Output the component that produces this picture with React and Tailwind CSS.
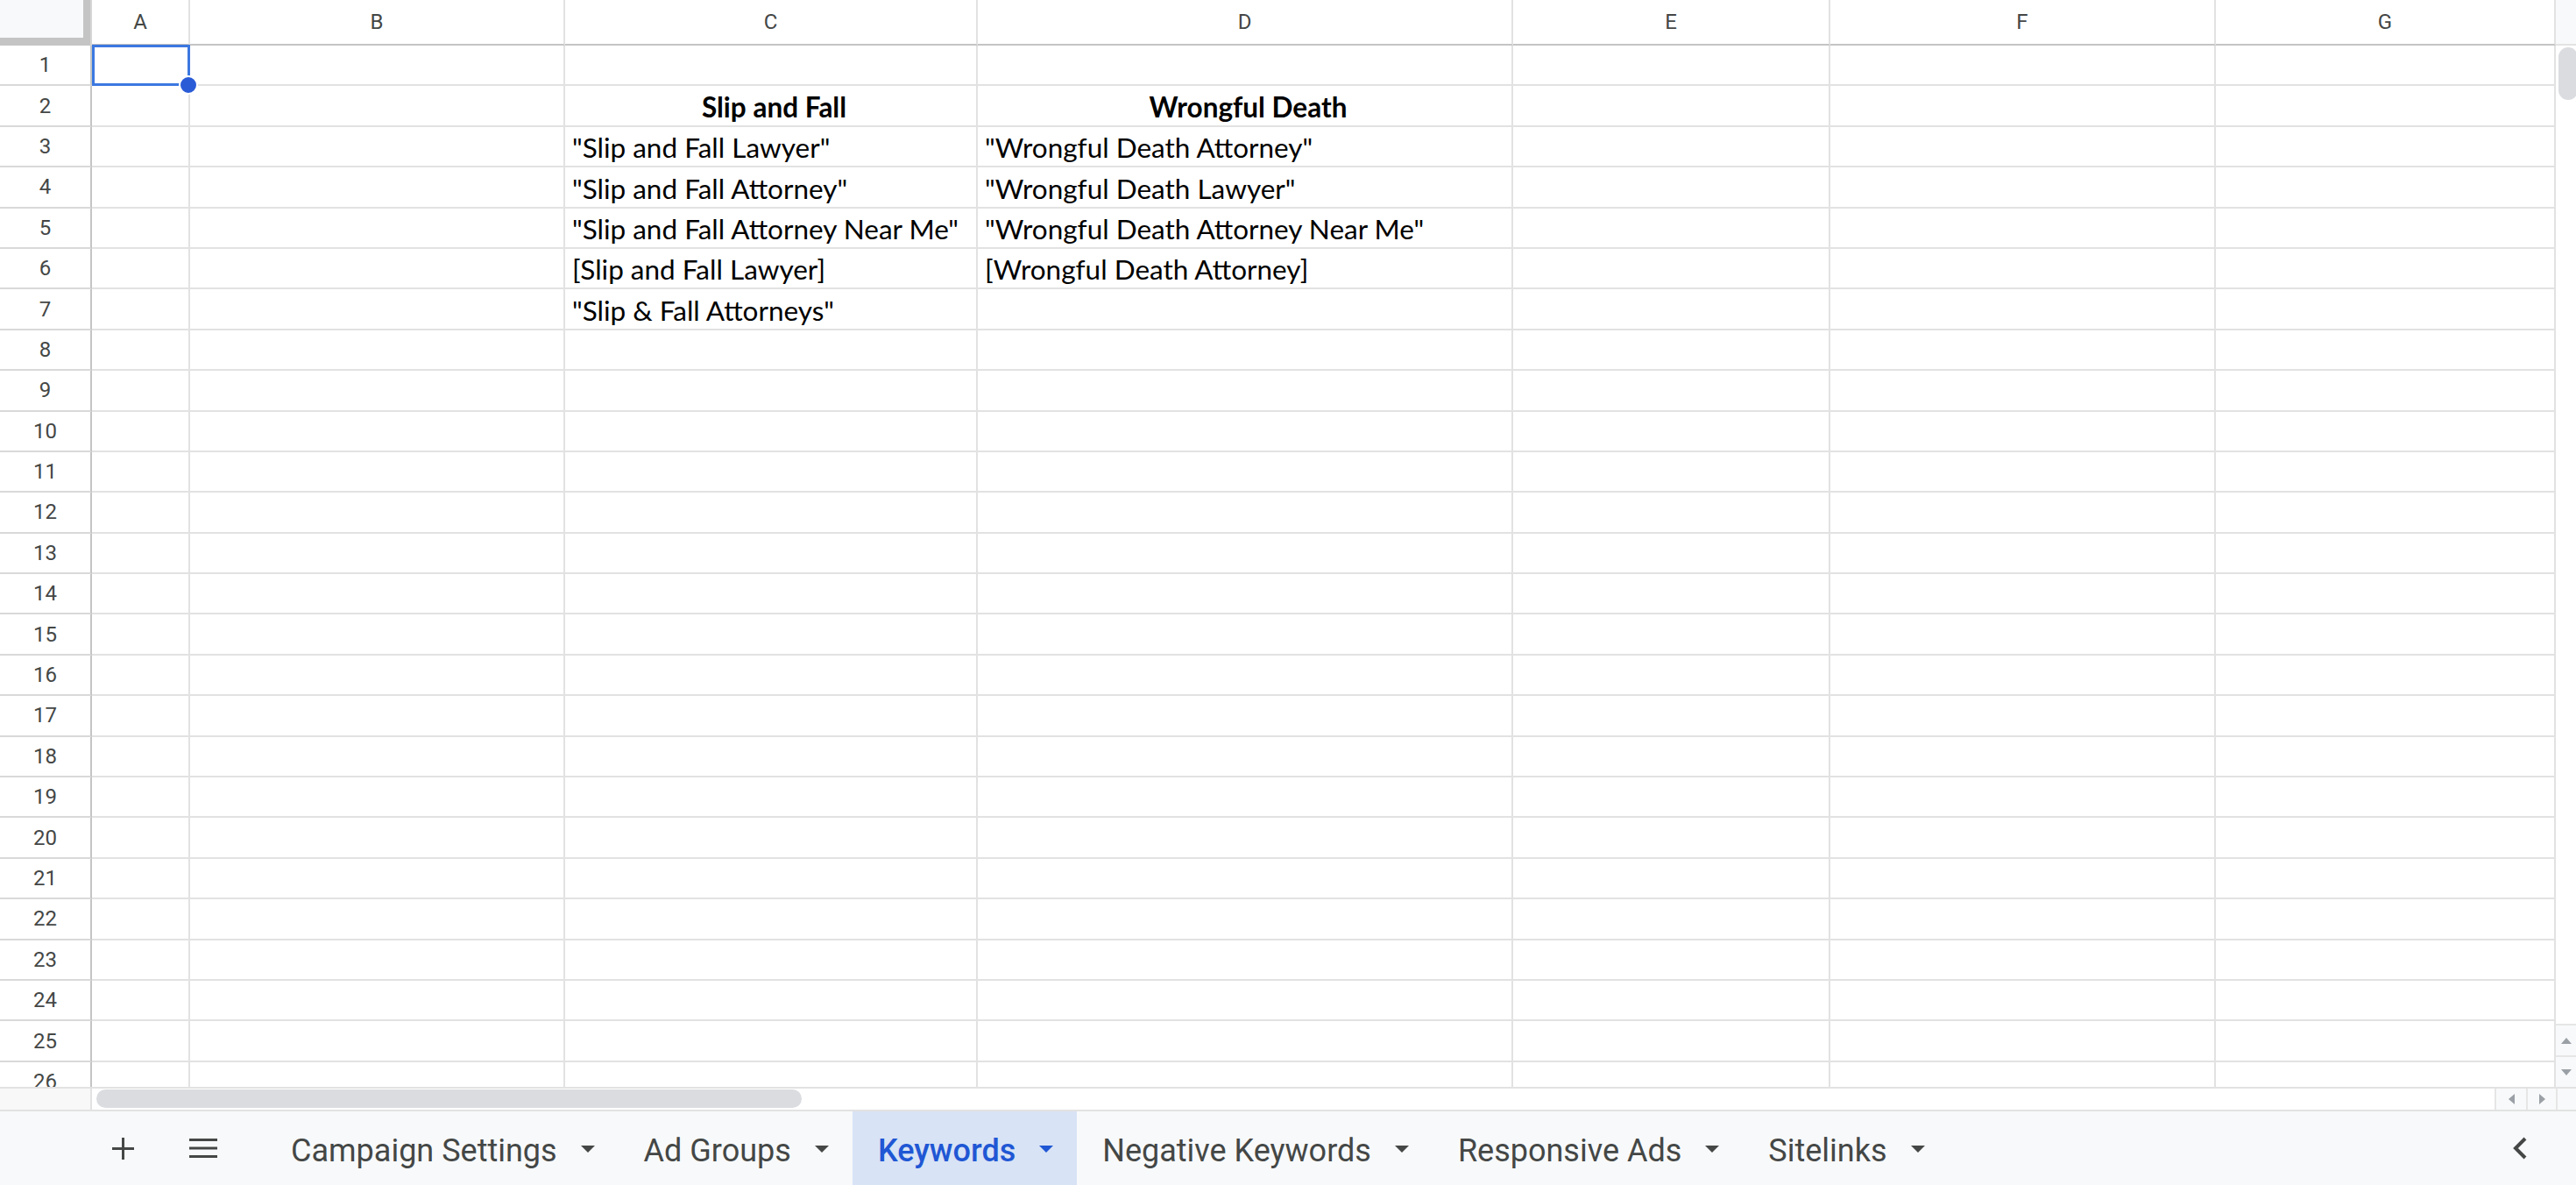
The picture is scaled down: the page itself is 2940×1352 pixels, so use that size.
import clsx from 'clsx';

const cols = 'grid grid-cols-[105px_112px_428px_471px_611px_362px_440px_388px]';
const letters = ['A', 'B', 'C', 'D', 'E', 'F', 'G'];

const data = {
  2: { C: 'Slip and Fall', D: 'Wrongful Death', bold: true },
  3: { C: '"Slip and Fall Lawyer"', D: '"Wrongful Death Attorney"' },
  4: { C: '"Slip and Fall Attorney"', D: '"Wrongful Death Lawyer"' },
  5: { C: '"Slip and Fall Attorney Near Me"', D: '"Wrongful Death Attorney Near Me"' },
  6: { C: '[Slip and Fall Lawyer]', D: '[Wrongful Death Attorney]' },
  7: { C: '"Slip & Fall Attorneys"', D: '' },
};

const tabs = ['Campaign Settings', 'Ad Groups', 'Keywords', 'Negative Keywords', 'Responsive Ads', 'Sitelinks'];

function Caret({ color }) {
  return (
    <svg width="16" height="8" viewBox="0 0 16 8">
      <path d="M0 0 L16 0 L8 8 Z" fill={color} />
    </svg>
  );
}

function HeaderRow() {
  return (
    <div className={clsx(cols, 'h-[52px] shrink-0')}>
      <div className="h-full border-r-2 border-[#d6d6d6] bg-white">
        <div className="h-full w-[103px] border-r-[8px] border-b-[9px] border-[#c4c4c4] bg-[#f8f9fa]" />
      </div>
      {letters.map((l) => (
        <div key={l} className="flex items-center justify-center border-r-2 border-b-2 border-r-[#e2e2e2] border-b-[#c4c4c4] text-[24px] text-[#444746]">
          {l}
        </div>
      ))}
    </div>
  );
}

function Row({ n }) {
  const row = data[n] || {};
  return (
    <div className={clsx(cols, 'h-[46.4px] shrink-0')}>
      <div className="flex items-center justify-center border-r-2 border-b-2 border-r-[#c4c4c4] border-b-[#d9d9d9] text-[24px] text-[#444746]">
        {n}
      </div>
      {letters.map((l) => (
        <div
          key={l}
          className={clsx(
            'relative flex items-end overflow-visible whitespace-nowrap border-r-2 border-b-2 border-[#e2e2e2] pb-[5px] pl-[8px] font-["Lato",sans-serif] text-[31.5px] leading-[31px] text-black',
            row.bold && 'justify-center pl-0 font-bold'
          )}
        >
          {row[l]}
          {n === 1 && l === 'A' && (
            <>
              <div className="absolute -top-[1px] left-0 -right-[2px] -bottom-[2px] border-[3px] border-[#3b78e0]" />
              <div className="absolute -right-[11px] -bottom-[12px] z-10 h-[22px] w-[22px] rounded-full border-2 border-white bg-[#2a5bd7]" />
            </>
          )}
        </div>
      ))}
    </div>
  );
}

function VScroll() {
  return (
    <div className="flex h-full w-[23px] flex-col">
      <div className="h-[52px] border-b-2 border-[#e2e2e2] bg-[#f8f9fa]" />
      <div className="flex-1 bg-white pl-[3px] pt-[2px]">
        <div className="h-[60px] w-[22px] rounded-full bg-[#dadce0]" />
      </div>
      <div className="flex h-[36px] items-center justify-center border-t-2 border-[#e6e6e6] bg-[#f8f9fa]">
        <svg width="12" height="7" viewBox="0 0 12 7"><path d="M0 7 L12 7 L6 0 Z" fill="#9aa0a6" /></svg>
      </div>
      <div className="flex h-[36px] items-center justify-center border-t-2 border-[#e6e6e6] bg-[#f8f9fa]">
        <svg width="12" height="7" viewBox="0 0 12 7"><path d="M0 0 L12 0 L6 7 Z" fill="#9aa0a6" /></svg>
      </div>
    </div>
  );
}

function HScroll() {
  return (
    <div className="flex h-[26px] shrink-0 border-t-2 border-[#e2e2e2] bg-white">
      <div className="h-full w-[105px] border-r-2 border-[#e2e2e2] bg-[#f8f8f8]" />
      <div className="flex-1 pl-[5px] pt-[1px]">
        <div className="h-[21px] w-[805px] rounded-full bg-[#dadce0]" />
      </div>
      <div className="flex w-[36px] items-center justify-center border-l-2 border-[#e6e6e6] bg-[#f8f9fa]">
        <svg width="7" height="12" viewBox="0 0 7 12"><path d="M7 0 L7 12 L0 6 Z" fill="#9aa0a6" /></svg>
      </div>
      <div className="flex w-[34px] items-center justify-center border-l-2 border-[#e6e6e6] bg-[#f8f9fa]">
        <svg width="7" height="12" viewBox="0 0 7 12"><path d="M0 0 L0 12 L7 6 Z" fill="#9aa0a6" /></svg>
      </div>
      <div className="w-[23px] border-l-2 border-[#e6e6e6] bg-[#f8f9fa]" />
    </div>
  );
}

function TabBar() {
  return (
    <div className="flex h-[86px] shrink-0 items-center border-t-2 border-[#e2e2e2] bg-[#f8f9fa] font-['Roboto',sans-serif] text-[36px]">
      <svg className="ml-[128px]" width="25" height="25" viewBox="0 0 25 25">
        <path d="M12.5 0 V25 M0 12.5 H25" stroke="#444746" strokeWidth="3" />
      </svg>
      <svg className="ml-[63px]" width="32" height="22" viewBox="0 0 32 22">
        <path d="M0 1.5 H32 M0 11 H32 M0 20.5 H32" stroke="#444746" strokeWidth="3" />
      </svg>
      <div className="ml-[55px] flex h-full">
        {tabs.map((t) => {
          const active = t === 'Keywords';
          return (
            <div
              key={t}
              className={clsx(
                'flex h-full items-center gap-[27px] pl-[29px] pr-[27px]',
                active ? 'bg-[#d8e3f5] font-medium text-[#1f57d4]' : 'text-[#444746]'
              )}
            >
              <span className="mt-[6px]">{t}</span>
              <div className="mt-[2px]">
                <Caret color={active ? '#1f57d4' : '#444746'} />
              </div>
            </div>
          );
        })}
      </div>
      <div className="flex-1" />
      <svg className="mr-[56px]" width="16" height="26" viewBox="0 0 16 26">
        <path d="M14 2 L3 13 L14 24" stroke="#444746" strokeWidth="4" fill="none" />
      </svg>
    </div>
  );
}

export default function App() {
  const rows = Array.from({ length: 26 }, (_, i) => i + 1);
  return (
    <div className="flex h-[1352px] w-[2940px] flex-col overflow-hidden bg-white font-['Roboto',sans-serif]">
      <div className="flex h-[1240px] shrink-0">
        <div className="flex h-full w-[2917px] flex-col overflow-hidden">
          <HeaderRow />
          {rows.map((n) => (
            <Row key={n} n={n} />
          ))}
        </div>
        <VScroll />
      </div>
      <HScroll />
      <TabBar />
    </div>
  );
}
